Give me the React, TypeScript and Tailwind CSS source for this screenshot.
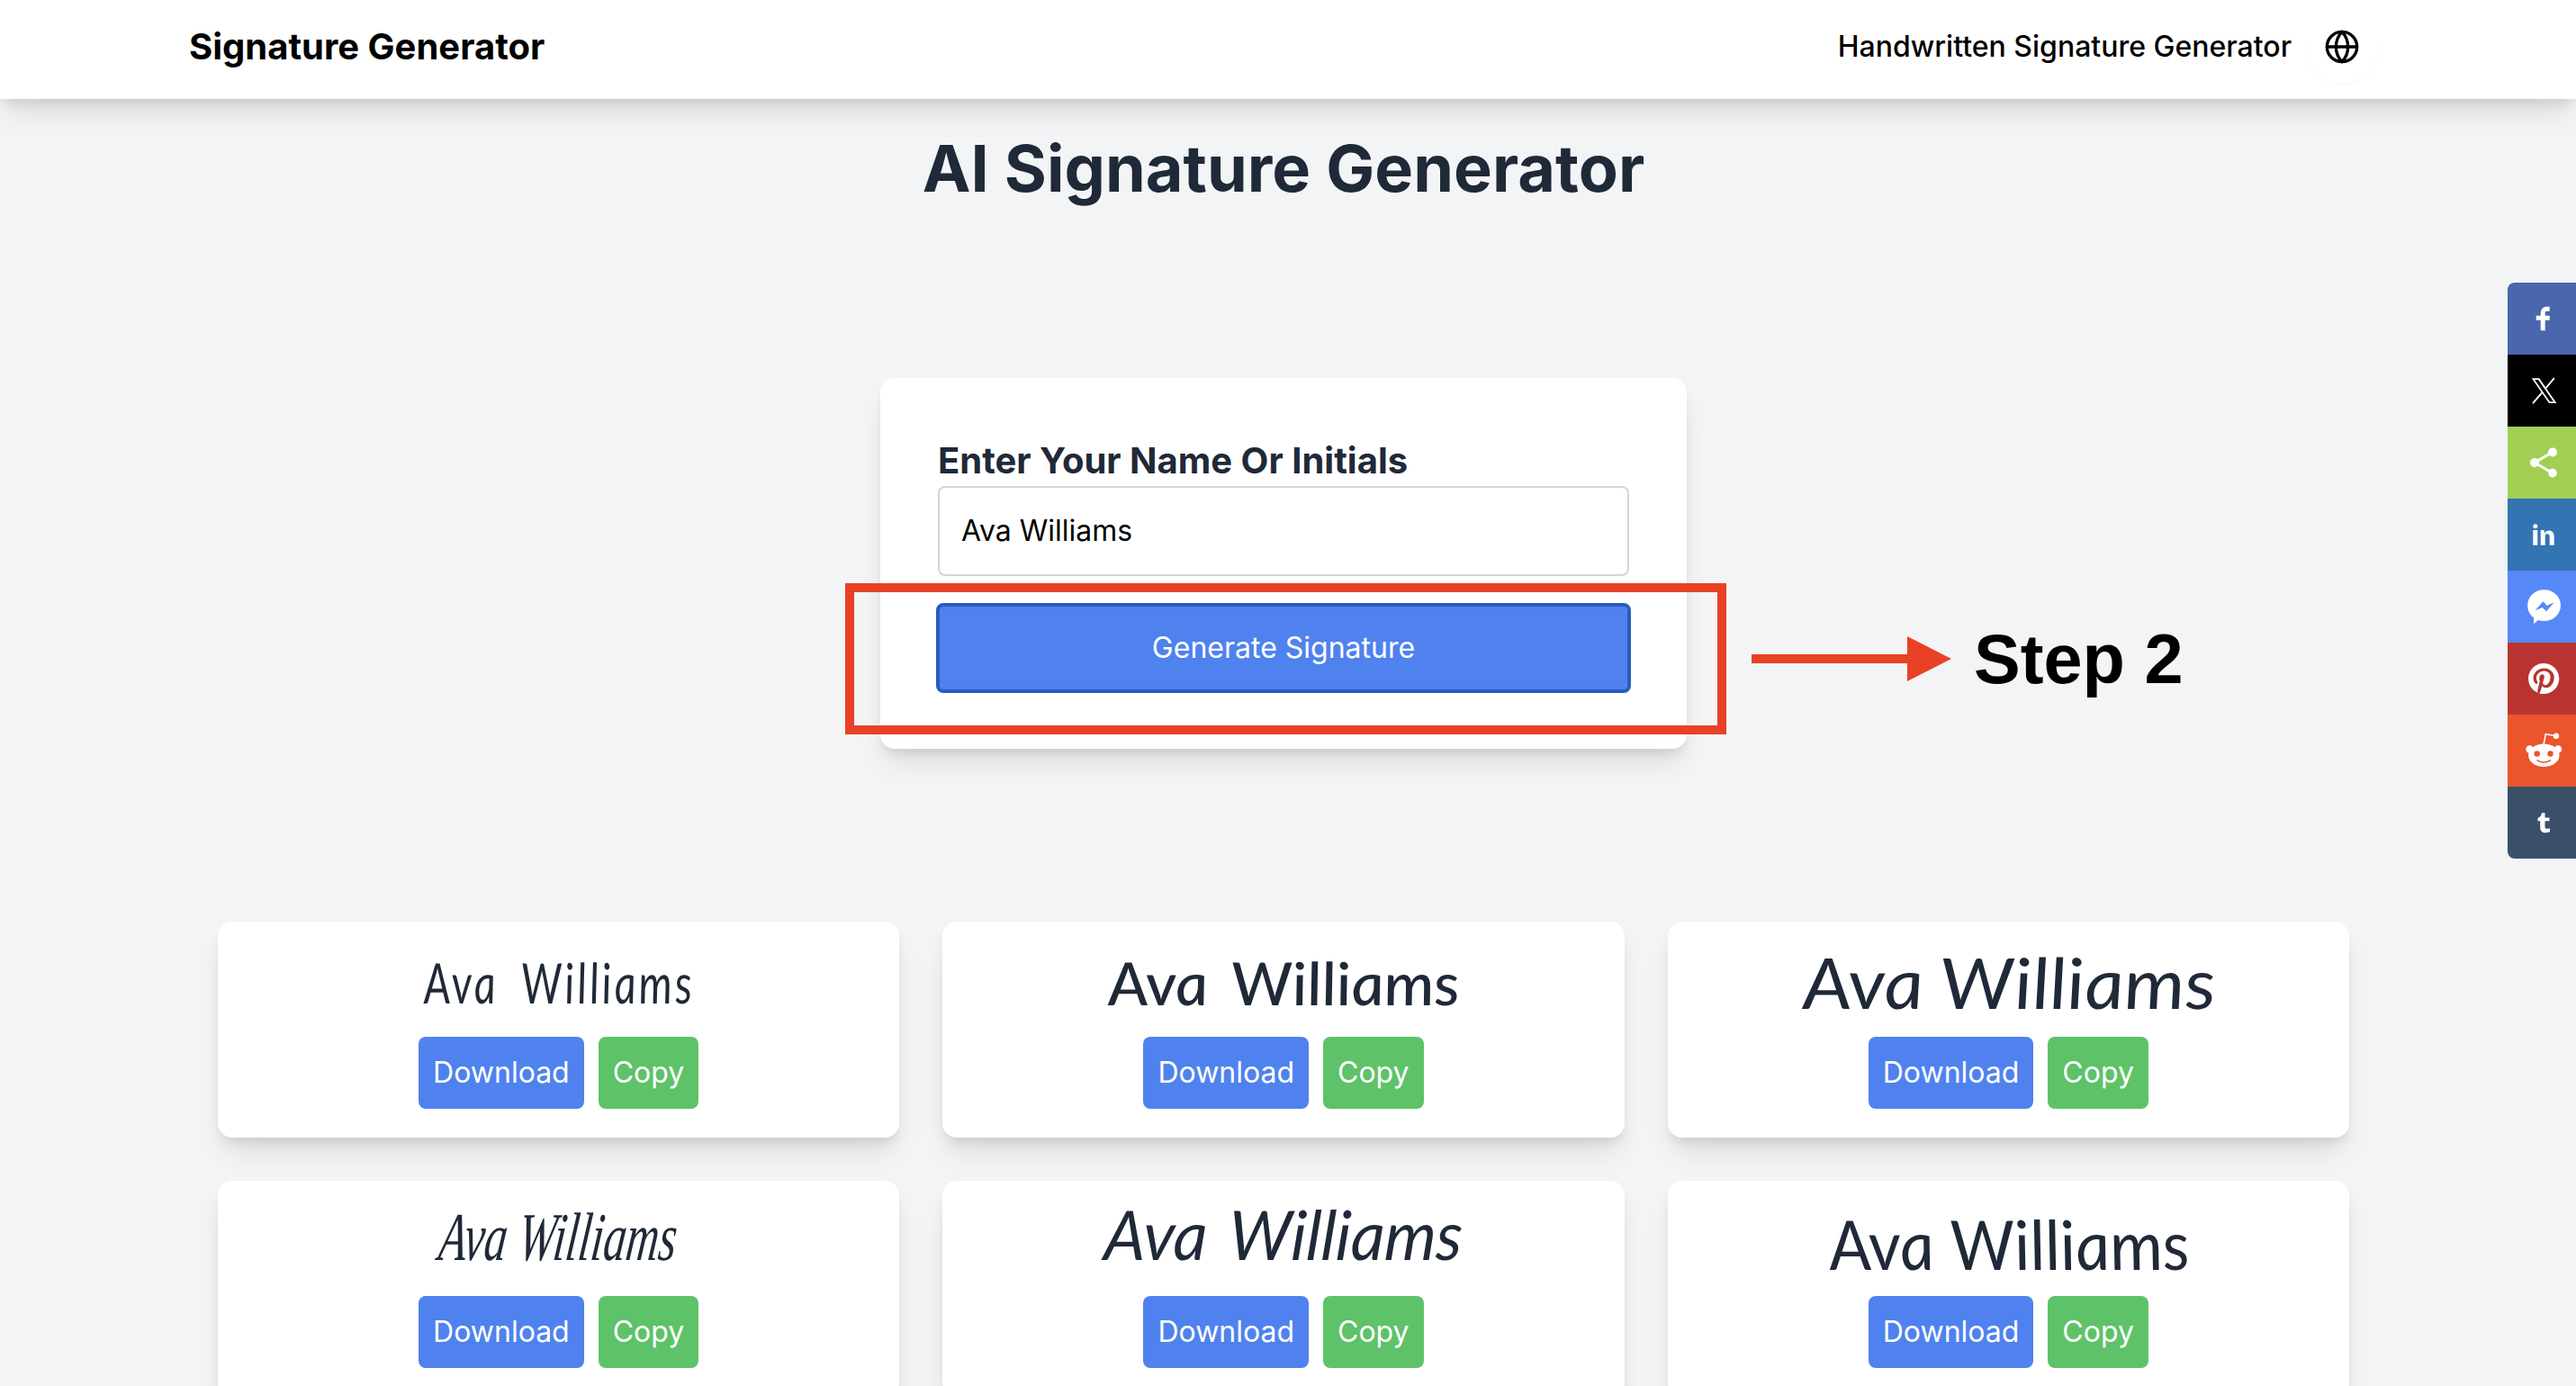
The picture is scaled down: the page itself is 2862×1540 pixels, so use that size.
import type { ReactNode } from "react";
import { Globe } from "lucide-react";

const signatures = [
  "text-[62px] leading-[134px] italic font-normal font-[Lato,sans-serif] tracking-[4px] [word-spacing:16px] scale-x-[0.76] skew-x-[5deg]",
  "text-[66px] leading-[136px] italic font-medium font-[Lato,sans-serif] [word-spacing:10px] scale-x-[1.07] skew-x-[6deg]",
  "text-[78px] leading-[134px] italic font-normal font-[Lato,sans-serif] scale-x-[1.1] skew-x-[4deg]",
  "text-[76px] leading-[125px] italic font-normal font-['Liberation_Serif',serif] scale-x-[0.66] -skew-x-[10deg]",
  "text-[76px] leading-[117px] italic font-normal font-[Lato,sans-serif] [word-spacing:8px] scale-x-[0.96] -skew-x-[3deg]",
  "text-[76px] leading-[139px] italic font-normal font-[Lato,sans-serif] [word-spacing:2px] scale-x-[0.98] skew-x-[8deg]",
];

const shares: { name: string; color: string; icon: ReactNode }[] = [
  {
    name: "Facebook",
    color: "bg-[#4a66ad]",
    icon: (
      <path d="m21.7 16.7h5v5h-5v11.6h-5v-11.6h-5v-5h5v-2.1c0-2 0.6-4.5 1.8-5.9 1.3-1.3 2.8-2 4.7-2h3.5v5h-3.5c-0.9 0-1.5 0.6-1.5 1.5v3.5z" />
    ),
  },
  {
    name: "X",
    color: "bg-black",
    icon: (
      <g fill="none" stroke="#fff">
        <path d="M8.500 7.200h6.200l18 26h-6.200z" strokeWidth="1.8" />
        <path d="M31.800 6.200 21.800 18M18.400 22.200 8 34.200" strokeWidth="1.9" />
      </g>
    ),
  },
  {
    name: "ShareThis",
    color: "bg-[#a2cf53]",
    icon: (
      <path d="m30 26.8c2.7 0 4.8 2.2 4.8 4.8s-2.1 5-4.8 5-4.8-2.3-4.8-5c0-0.3 0-0.7 0-1.1l-11.8-6.8c-0.9 0.8-2.1 1.3-3.4 1.3-2.7 0-5-2.3-5-5s2.3-5 5-5c1.3 0 2.5 0.5 3.4 1.3l11.8-6.8c-0.1-0.4-0.2-0.8-0.2-1.1 0-2.8 2.3-5 5-5s5 2.2 5 5-2.3 5-5 5c-1.3 0-2.5-0.6-3.4-1.4l-11.8 6.8c0.1 0.4 0.2 0.8 0.2 1.2s-0.1 0.8-0.2 1.2l11.9 6.8c0.9-0.7 2.1-1.2 3.3-1.2z" />
    ),
  },
  {
    name: "LinkedIn",
    color: "bg-[#3375b2]",
    icon: (
      <path d="m13.3 31.7h-5v-16.7h5v16.7z m18.4 0h-5v-8.9c0-2.4-0.9-3.5-2.5-3.5-1.3 0-2.1 0.6-2.5 1.9v10.5h-5s0-15 0-16.7h3.9l0.3 3.3h0.1c1-1.6 2.7-2.8 4.9-2.8 1.7 0 3.1 0.5 4.2 1.7 1 1.2 1.6 2.8 1.6 5.1v9.4z m-18.3-20.9c0 1.4-1.1 2.5-2.6 2.5s-2.5-1.1-2.5-2.5 1.1-2.5 2.5-2.5 2.6 1.2 2.6 2.5z" />
    ),
  },
  {
    name: "Messenger",
    color: "bg-[#5788f7]",
    icon: (
      <path
        fillRule="evenodd"
        d="M20.500 1.300C30.700 1.300 39 8.900 39 18.700S30.700 36 20.500 36c-2.300 0-4.600-.3-6.600-1L9 39.300V32.300C4.700 29.200 2.200 24.400 2.200 18.700 2.200 8.900 10.300 1.300 20.500 1.300zM10.500 24.500l8-3.500 4.700 4.300 8.400-10-7.800 3.600-4.300-4.600z"
      />
    ),
  },
  {
    name: "Pinterest",
    color: "bg-[#b93430]",
    icon: (
      <path d="m37.3 20q0 4.700-2.300 8.600t-6.300 6.200-8.600 2.300q-2.400 0-4.800-0.700 1.300-2 1.700-3.600 0.200-0.800 1.200-4.700 0.500 0.800 1.700 1.500t2.500 0.600q2.700 0 4.800-1.500t3.300-4.200 1.200-6.100q0-2.500-1.400-4.700t-3.800-3.700-5.700-1.400q-2.400 0-4.400 0.700t-3.400 1.700-2.500 2.400-1.500 2.900-0.400 3q0 2.400 0.800 4.100t2.700 2.500q0.600 0.300 0.800-0.500 0.100-0.100 0.200-0.600t0.200-0.700q0.100-0.500-0.300-1-1.100-1.300-1.100-3.300 0-3.400 2.300-5.800t6.100-2.500q3.400 0 5.300 1.900t1.900 4.700q0 3.800-1.600 6.500t-3.900 2.600q-1.300 0-2.200-0.900t-0.500-2.400q0.200-0.800 0.600-2.100t0.700-2.300 0.200-1.600q0-1.200-0.600-1.900t-1.700-0.700q-1.400 0-2.300 1.200t-1 3.200q0 1.600 0.600 2.700l-2.200 9.400q-0.400 1.500-0.300 3.900-4.600-2-7.500-6.300t-2.800-9.400q0-4.700 2.300-8.600t6.200-6.200 8.600-2.300 8.600 2.300 6.300 6.200 2.300 8.600z" />
    ),
  },
  {
    name: "Reddit",
    color: "bg-[#ea552b]",
    icon: (
      <g>
        <path d="M20 13.500 22.300 1.600 31 3.200" fill="none" stroke="#fff" strokeWidth="1.500" />
        <circle cx="34" cy="3.700" r="3.200" />
        <circle cx="4.500" cy="18.500" r="4.200" />
        <circle cx="36" cy="18.500" r="4.200" />
        <ellipse cx="20.300" cy="25.300" rx="17.200" ry="12.800" />
        <g fill="#ea552b">
          <circle cx="12.700" cy="23.500" r="3.200" />
          <circle cx="27.500" cy="23.500" r="3.200" />
        </g>
        <path d="M13 30.900q7 4.200 14.500 0" fill="none" stroke="#ea552b" strokeWidth="1.600" strokeLinecap="round" />
      </g>
    ),
  },
  {
    name: "Tumblr",
    color: "bg-[#3a4f68]",
    icon: (
      <path d="m27 30.200v-4.300c-1.100 0.600-2.100 0.900-3.200 0.900-1.500 0-2.300-0.800-2.300-2.400v-6.200h5v-3.700h-5v-5.200h-3.600c-0.400 3-1.600 4.600-4.400 5.600v3.300h2.700v7.200c0 3.800 2.200 5.800 6 5.800 1.700 0 3.300-0.300 4.800-1z" />
    ),
  },
];

function Header() {
  return (
    <header className="flex h-[110px] items-center justify-between bg-white pr-[220px] pl-[210px] shadow-[0_20px_30px_-6px_rgba(0,0,0,0.1),0_8px_12px_-4px_rgba(0,0,0,0.1)]">
      <div className="pb-[7px] text-[40px] leading-none font-bold text-black">Signature Generator</div>
      <nav className="flex items-center gap-[16px] pb-[6px]">
        <span className="text-[32px] leading-none font-medium text-black">Handwritten Signature Generator</span>
        <button className="flex size-20 items-center justify-center rounded-full shadow-[0_3px_4px_rgba(0,0,0,0.02)]">
          <Globe className="size-10 text-black" strokeWidth={2} />
        </button>
      </nav>
    </header>
  );
}

function ShareBar() {
  return (
    <aside className="absolute top-[314px] right-0 w-[76px] overflow-hidden rounded-l-lg">
      {shares.map((s) => (
        <div key={s.name} className={`flex h-20 items-center justify-center pl-[4px] ${s.color}`}>
          <svg viewBox="0 0 40 40" className="size-10 overflow-visible" fill="#fff" aria-label={s.name}>
            {s.icon}
          </svg>
        </div>
      ))}
    </aside>
  );
}

function Annotation() {
  return (
    <div className="absolute top-[227px] -left-[39px] flex h-[170px] items-center">
      <div className="h-[168px] w-[979px] shrink-0 border-[10px] border-[#e94126]" />
      <svg viewBox="0 0 222 50" className="ml-[28px] h-[50px] w-[222px] shrink-0" fill="#e94126">
        <path d="M0 20h173V0l49 25-49 25V30H0z" />
      </svg>
      <span className="ml-[25px] pt-[1px] font-['Liberation_Sans',sans-serif] text-[77.500px] leading-none font-bold whitespace-nowrap text-black">
        Step 2
      </span>
    </div>
  );
}

function SignatureForm() {
  return (
    <section className="relative mx-auto mt-[176px] h-[412px] w-[896px] rounded-2xl bg-white px-16 pt-16 shadow-[0_20px_30px_-6px_rgba(0,0,0,0.1),0_8px_12px_-4px_rgba(0,0,0,0.1)]">
      <label className="block text-[40px] leading-[56px] font-bold text-[#1f2937]">Enter Your Name Or Initials</label>
      <div className="flex h-[100px] items-center rounded-lg border-2 border-gray-300 bg-white px-6 text-[32px] text-black">
        Ava Williams
      </div>
      <button className="-mx-[2px] mt-[30px] block h-[100px] w-[772px] rounded-lg border-4 border-[#2a5cc1] bg-[#4f82ee] text-[32px] text-white">
        Generate Signature
      </button>
      <Annotation />
    </section>
  );
}

function SignatureCard({ style }: { style: string }) {
  return (
    <article className="h-[240px] rounded-2xl bg-white shadow-[0_20px_30px_-6px_rgba(0,0,0,0.1),0_8px_12px_-4px_rgba(0,0,0,0.1)]">
      <div className="flex h-32 items-start justify-center">
        <p className={`whitespace-nowrap text-[#1f2937] ${style}`}>Ava Williams</p>
      </div>
      <div className="flex justify-center gap-4 text-[32px] text-white">
        <button className="h-20 rounded-lg bg-[#4f82ee] px-4">Download</button>
        <button className="h-20 rounded-lg bg-[#5ec269] px-4">Copy</button>
      </div>
    </article>
  );
}

export default function App() {
  return (
    <div className="relative h-[1540px] w-[2862px] overflow-hidden bg-gray-100 font-[Inter,sans-serif]">
      <Header />
      <ShareBar />
      <main className="w-[2852px]">
        <h1 className="pt-[37px] pb-[17px] text-center text-[72px] leading-[80px] font-bold text-[#1f2937]">
          AI Signature Generator
        </h1>
        <SignatureForm />
        <div className="mt-48 grid grid-cols-3 gap-12 px-[242px]">
          {signatures.map((style) => (
            <SignatureCard key={style} style={style} />
          ))}
        </div>
      </main>
    </div>
  );
}
